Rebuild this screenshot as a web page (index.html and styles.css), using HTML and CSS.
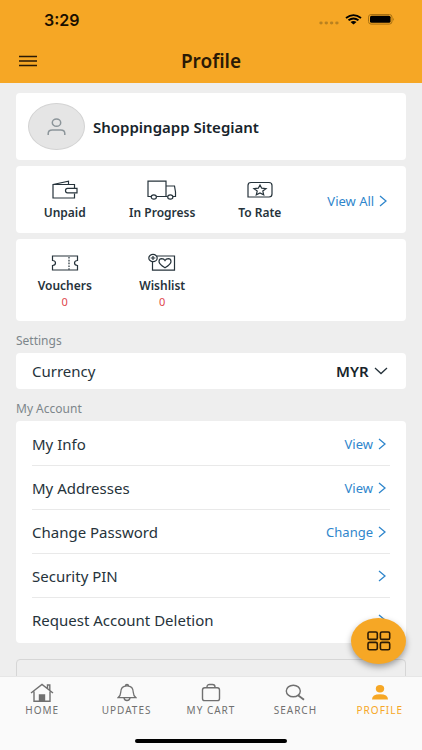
FILE: index.html
```html
<!DOCTYPE html>
<html lang="en">
<head>
    <meta charset="UTF-8">
    <meta name="viewport" content="width=device-width, initial-scale=1.0">
    <title>Profile</title>
    <link rel="stylesheet" href="styles.css">
</head>
<body>
    <svg class="sprite" aria-hidden="true">
        <symbol id="chevron" viewBox="0 0 8 12">
            <path d="M1 1l6 5-6 5" fill="none" stroke="currentColor" stroke-width="1.3"/>
        </symbol>
    </svg>

    <header class="header">
        <div class="status-bar">
            <span class="time">3:29</span>
            <div class="status-icons">
                <svg width="20" height="4" viewBox="0 0 20 4" fill="#b9811f">
                    <ellipse cx="2" cy="2" rx="1.7" ry="1.4"/>
                    <ellipse cx="7.3" cy="2" rx="1.7" ry="1.4"/>
                    <ellipse cx="12.6" cy="2" rx="1.7" ry="1.4"/>
                    <ellipse cx="17.9" cy="2" rx="1.7" ry="1.4"/>
                </svg>
                <svg width="17" height="11" viewBox="0 0 17 11">
                    <path d="M1 3.9Q8.500-1.700 16 3.900M3.500 6.300Q8.500 2.700 13.500 6.300" fill="none" stroke="#000" stroke-width="1.900"/>
                    <path d="M5.500 8.100Q8.500 6 11.500 8.100L8.500 10.600z" fill="#000"/>
                </svg>
                <svg width="27" height="11" viewBox="0 0 27 11">
                    <rect x=".5" y=".5" width="23.500" height="9.600" rx="2.600" fill="none" stroke="#a87010"/>
                    <rect x="2" y="1.800" width="20.500" height="7" rx="1.500" fill="#000"/>
                    <path d="M25 3.700q1.700 1.600 0 3.200z" fill="#a87010"/>
                </svg>
            </div>
        </div>
        <div class="title-bar">
            <button class="menu-btn" type="button" aria-label="Menu">
                <svg width="18" height="12" viewBox="0 0 18 12" stroke="#2b1a05" stroke-width="1.700">
                    <path d="M0 1.500h18M0 6h18M0 10.500h18"/>
                </svg>
            </button>
            <h1>Profile</h1>
        </div>
    </header>

    <main class="content">
        <section class="card user">
            <div class="avatar">
                <svg width="19" height="18" viewBox="0 0 19 18" fill="none" stroke="#8c959a" stroke-width="1.500">
                    <ellipse cx="9.500" cy="4.700" rx="4.200" ry="3.600"/>
                    <path d="M1.200 17v-1.500q0-3.500 4-3.500h8.600q4 0 4 3.500V17"/>
                </svg>
            </div>
            <h2>Shoppingapp Sitegiant</h2>
        </section>

        <section class="card tiles">
            <a class="tile" href="#">
                <svg width="28" height="20" viewBox="0 0 28 20" fill="none" stroke="#26333b" stroke-width="1.200">
                    <path d="M23.500 8V4.500H2V18h21.500v-4.500M2 4.500L17.500 1.200v3"/>
                    <path d="M26 8.300h-9.500q-2 0-2 2.300t2 2.300H26z"/>
                </svg>
                Unpaid
            </a>
            <a class="tile" href="#">
                <svg width="30" height="20" viewBox="0 0 30 20" fill="none" stroke="#26333b" stroke-width="1.200">
                    <path d="M4 16.500H1V1.200h18v15.300H9.500M19 6h8.500l1 6v4.500H26M19 16.500h1.500"/>
                    <ellipse cx="6.800" cy="17" rx="2.600" ry="2.200"/>
                    <ellipse cx="23.300" cy="17" rx="2.600" ry="2.200"/>
                </svg>
                In Progress
            </a>
            <a class="tile" href="#">
                <svg width="26" height="20" viewBox="0 0 26 20" fill="none" stroke="#26333b" stroke-width="1.200">
                    <path d="M1 17V5.500Q1 2.500 4 2.500h18q3 0 3 3V14q0 3-3 3z"/>
                    <path d="M13 5l1.700 3.200 4.300.4-3.200 2.500.9 3.700L13 12.900l-3.700 1.900.9-3.700L7 8.600l4.300-.4z"/>
                </svg>
                To Rate
            </a>
            <a class="more view-all" href="#">View All <svg class="chevron"><use href="#chevron"/></svg></a>
        </section>

        <section class="card tiles">
            <a class="tile" href="#">
                <svg width="28" height="20" viewBox="0 0 28 20" fill="none" stroke="#26333b" stroke-width="1.200">
                    <path d="M1.500 3h25v4.500q-3 .3-3 2.500t3 2.500V17h-25v-4.500q3-.3 3-2.500t-3-2.500z"/>
                    <path d="M18 4v13" stroke-dasharray="1.600 1.200"/>
                </svg>
                Vouchers
                <span class="count">0</span>
            </a>
            <a class="tile" href="#">
                <svg width="28" height="20" viewBox="0 0 28 20" fill="none" stroke="#26333b" stroke-width="1.200">
                    <path d="M9 3h17.500v14.200H4.500V9"/>
                    <ellipse cx="5" cy="5" rx="4.200" ry="3.600"/>
                    <path d="M5 3v4M2.700 5h4.600M17 14.700Q10.800 11 11 8.200 11.200 5.700 13.700 5.600q2.300 0 3.300 1.900 1-1.900 3.300-1.900Q22.800 5.700 23 8.200 23.200 11 17 14.700z"/>
                </svg>
                Wishlist
                <span class="count">0</span>
            </a>
        </section>

        <h3 class="section-title">Settings</h3>
        <section class="card currency">
            <label for="currency">Currency</label>
            <div class="select">
                <select id="currency" name="currency">
                    <option>MYR</option>
                </select>
                <svg width="14" height="8" viewBox="0 0 14 8" fill="none" stroke="#26333b" stroke-width="1.300">
                    <path d="M1 1l6 5.500L13 1"/>
                </svg>
            </div>
        </section>

        <h3 class="section-title">My Account</h3>
        <section class="card list">
            <a class="row" href="#">My Info <span class="more">View <svg class="chevron"><use href="#chevron"/></svg></span></a>
            <a class="row" href="#">My Addresses <span class="more">View <svg class="chevron"><use href="#chevron"/></svg></span></a>
            <a class="row" href="#">Change Password <span class="more">Change <svg class="chevron"><use href="#chevron"/></svg></span></a>
            <a class="row" href="#">Security PIN <span class="more"><svg class="chevron"><use href="#chevron"/></svg></span></a>
            <a class="row" href="#">Request Account Deletion <span class="more"><svg class="chevron"><use href="#chevron"/></svg></span></a>
        </section>

        <button class="logout-btn" type="button" aria-label="Log out"></button>
    </main>

    <button class="fab" type="button" aria-label="Quick menu">
        <svg width="24" height="20" viewBox="0 0 24 20" fill="none" stroke="#2b1a05" stroke-width="1.600">
            <rect x="1" y="1" width="9.300" height="7.400" rx="1.500"/>
            <rect x="13.400" y="1" width="9.300" height="7.400" rx="1.500"/>
            <rect x="1" y="11.400" width="9.300" height="7.400" rx="1.500"/>
            <rect x="13.400" y="11.400" width="9.300" height="7.400" rx="1.500"/>
        </svg>
    </button>

    <footer class="footer">
        <nav class="tabs">
            <a class="tab" href="#">
                <svg width="24" height="20" viewBox="0 0 24 20" fill="none" stroke="currentColor" stroke-width="1.400">
                    <path d="M1 10L12 1.500 23 10M4 8.500v9.800h16V8.500M17.500 5.500V2h2.300v5.500"/>
                    <path d="M9.500 18v-6h5v6z" fill="currentColor"/>
                </svg>
                HOME
            </a>
            <a class="tab" href="#">
                <svg width="20" height="20" viewBox="0 0 20 20" fill="none" stroke="currentColor" stroke-width="1.300">
                    <path d="M1 14.700Q3.700 12.500 3.700 9.500 3.700 2.800 10 2.800t6.300 6.700q0 3 2.700 5.200zM8.500 2.800Q8.500 1.300 10 1.300t1.500 1.500M7 15q.5 2.500 3 2.500t3-2.500"/>
                </svg>
                UPDATES
            </a>
            <a class="tab" href="#">
                <svg width="20" height="20" viewBox="0 0 20 20" fill="none" stroke="currentColor" stroke-width="1.400">
                    <rect x="1.500" y="4.800" width="17" height="12.800" rx="2.200"/>
                    <path d="M6 4.800V4q0-2.500 2.500-2.500h3Q14 1.500 14 4v.8"/>
                </svg>
                MY CART
            </a>
            <a class="tab" href="#">
                <svg width="20" height="20" viewBox="0 0 20 20" fill="none" stroke="currentColor" stroke-width="1.400">
                    <ellipse cx="8.300" cy="8" rx="7" ry="5.800"/>
                    <path d="M13 12.200l6 4.500" stroke-width="1.900"/>
                </svg>
                SEARCH
            </a>
            <a class="tab active" href="#">
                <svg width="18" height="20" viewBox="0 0 18 20" fill="currentColor">
                    <ellipse cx="9" cy="5.700" rx="4.200" ry="3.700"/>
                    <path d="M1 16.500q0-5.200 8-5.200t8 5.200z"/>
                </svg>
                PROFILE
            </a>
        </nav>
        <div class="home-indicator"></div>
    </footer>
</body>
</html>
```

FILE: styles.css
```css
* {
    margin: 0;
    padding: 0;
    box-sizing: border-box;
}

body {
    display: flex;
    flex-direction: column;
    height: 100vh;
    background: #eee;
    color: #26333b;
    font-family: "Noto Sans", "Open Sans", sans-serif;
    font-size: 15px;
    line-height: 20px;
}

a {
    color: inherit;
    text-decoration: none;
}

button {
    border: none;
    background: none;
    cursor: pointer;
}

svg {
    display: block;
}

.sprite {
    position: absolute;
    width: 0;
    height: 0;
}

/* Header */
.header {
    background: #f6a725;
}

.status-bar {
    display: flex;
    justify-content: space-between;
    align-items: center;
    height: 39px;
    padding: 0 27px 0 44px;
}

.time {
    font-family: Inter, sans-serif;
    font-size: 16px;
    font-weight: 600;
    color: #1a0f00;
}

.status-icons {
    display: flex;
    align-items: center;
    gap: 6px;
}

.status-icons svg:first-child {
    align-self: flex-end;
}

.title-bar {
    display: grid;
    grid-template-columns: 1fr auto 1fr;
    align-items: center;
    height: 44px;
    padding: 0 19px;
}

.menu-btn {
    justify-self: start;
}

h1 {
    font-size: 19px;
    line-height: 24px;
    font-weight: 600;
    color: #2b1a05;
}

/* Content */
.content {
    flex: 1;
    min-height: 0;
    overflow-y: auto;
    scrollbar-width: none;
    padding: 10px 16px;
}

.card {
    margin-bottom: 6px;
    background: #fff;
    border-radius: 4px;
}

.user {
    display: flex;
    align-items: center;
    gap: 8px;
    padding: 10px 12px;
}

.avatar {
    display: flex;
    align-items: center;
    justify-content: center;
    width: 57px;
    height: 47px;
    border: 1px solid #d3d3d3;
    border-radius: 50%;
    background: #e5e5e5;
}

h2 {
    font-size: 15px;
    font-weight: 600;
    color: #18242b;
}

.tiles {
    display: grid;
    grid-template-columns: repeat(4, 1fr);
    padding: 14px 0 12px;
}

.tile {
    display: flex;
    flex-direction: column;
    align-items: center;
    font-size: 12px;
    line-height: 16px;
    font-weight: 600;
}

.tile svg {
    margin-bottom: 5px;
}

.count {
    font-size: 11px;
    line-height: 15px;
    font-weight: 400;
    color: #e0474c;
}

.more {
    display: flex;
    align-items: center;
    gap: 5px;
    font-size: 13px;
    color: #2f86cc;
}

.view-all {
    justify-content: center;
}

.chevron {
    width: 8px;
    height: 12px;
}

.section-title {
    padding: 4px 0 2px;
    font-size: 12px;
    font-weight: 400;
    color: #7d868b;
}

.currency {
    display: flex;
    justify-content: space-between;
    align-items: center;
    padding: 8px 18px 8px 16px;
}

.select {
    display: flex;
    align-items: center;
    gap: 5px;
}

select {
    appearance: none;
    border: none;
    background: none;
    color: #18242b;
    font: inherit;
    font-weight: 600;
}

.list {
    margin-bottom: 16px;
    padding: 1px 16px;
}

.row {
    display: flex;
    justify-content: space-between;
    align-items: center;
    height: 44px;
    padding-right: 4px;
    border-bottom: 1px solid #e9e9e9;
}

.row:last-child {
    border-bottom: none;
}

.logout-btn {
    width: 100%;
    height: 44px;
    border: 1px solid #d6d6d6;
    border-radius: 4px;
}

/* Floating button */
.fab {
    position: fixed;
    right: 16px;
    bottom: 86px;
    display: flex;
    align-items: center;
    justify-content: center;
    width: 55px;
    height: 46px;
    border-radius: 50%;
    background: #f6a725;
    box-shadow: 0 3px 6px rgba(0, 0, 0, 0.35);
}

/* Bottom tabs */
.footer {
    background: #fafafa;
    border-top: 1px solid #e6e6e6;
}

.tabs {
    display: grid;
    grid-template-columns: repeat(5, 1fr);
    padding: 6px 0 22px;
}

.tab {
    display: flex;
    flex-direction: column;
    align-items: center;
    font-size: 10px;
    line-height: 14px;
    letter-spacing: 1px;
    color: #707070;
}

.tab.active {
    color: #f6a725;
}

.home-indicator {
    width: 36%;
    height: 4px;
    margin: 0 auto 7px;
    border-radius: 2px;
    background: #000;
}
```
